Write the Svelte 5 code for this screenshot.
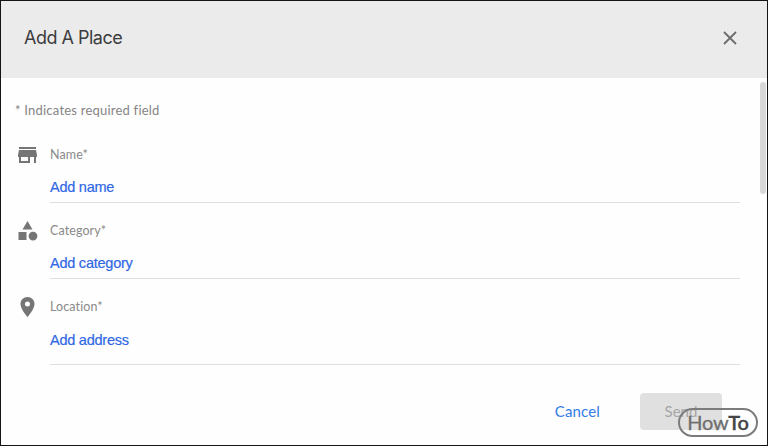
<script lang="ts">
	interface Field {
		id: string;
		label: string;
		action: string;
		icon: string;
	}

	const fields: Field[] = [
		{
			id: 'name',
			label: 'Name*',
			action: 'Add name',
			icon: 'M3 4h17v2H3zM3 7h17l1 5v2h-1v6h-2v-6h-4v6H3v-6H2v-2zM5 14v4h7v-4z'
		},
		{
			id: 'category',
			label: 'Category*',
			action: 'Add category',
			icon: 'M11.5 2l5 8.5h-10zM2.5 13h8v8h-8zM17 12.7a4.4 4.4 0 1 1 0 8.8a4.4 4.4 0 1 1 0-8.8z'
		},
		{
			id: 'location',
			label: 'Location*',
			action: 'Add address',
			icon: 'M11.5 2C7.6 2 4.5 5.1 4.5 9c0 5.2 7 13 7 13s7-7.8 7-13c0-3.9-3.1-7-7-7zm0 4.5a2.5 2.5 0 1 1 0 5a2.5 2.5 0 1 1 0-5z'
		}
	];
</script>

<div class="dialog">
	<header>
		<h1>Add A Place</h1>
		<button class="close" aria-label="Close">
			<svg width="14" height="14" viewBox="0 0 14 14">
				<path d="M1 1l12 12M13 1L1 13" />
			</svg>
		</button>
	</header>

	<main>
		<div class="form">
			<p class="hint">* Indicates required field</p>
			{#each fields as field (field.id)}
				<div class="field {field.id}">
					<svg class="icon" width="24" height="24" viewBox="0 0 24 24">
						<path fill-rule="evenodd" d={field.icon} />
					</svg>
					<div class="body">
						<span class="label">{field.label}</span>
						<button class="value">{field.action}</button>
					</div>
				</div>
			{/each}
		</div>
		<div class="scrollbar"></div>
	</main>

	<footer>
		<button class="cancel">Cancel</button>
		<button class="send" disabled>Send</button>
	</footer>

	<div class="watermark"><span>How</span><b>To</b></div>
</div>

<style>
	:global(body) {
		margin: 0;
	}

	.dialog {
		position: relative;
		box-sizing: border-box;
		width: 768px;
		height: 446px;
		border: 1px solid #151315;
		background: #fefefe;
		font-family: Lato, sans-serif;
		font-variant-ligatures: none;
		display: flex;
		flex-direction: column;
		overflow: hidden;
	}

	button {
		border: 0;
		padding: 0;
		background: none;
		font: inherit;
	}

	header {
		height: 77px;
		flex: none;
		box-sizing: border-box;
		padding: 0 30px 3px 23px;
		display: flex;
		align-items: center;
		justify-content: space-between;
		background: #ebebeb;
	}

	h1 {
		margin: 0;
		font: 400 18px/24px Inter, sans-serif;
		letter-spacing: -0.5px;
		color: #3c3c3e;
	}

	.close {
		display: flex;
	}

	.close path {
		stroke: #6c6c6c;
		stroke-width: 1.8;
		fill: none;
	}

	main {
		display: flex;
		justify-content: space-between;
		height: 291px;
		flex: none;
	}

	.form {
		width: 739px;
	}

	.hint {
		margin: 22px 0 21px 14px;
		font-size: 13px;
		line-height: 20px;
		letter-spacing: 0.22px;
		color: #858585;
	}

	.field {
		display: flex;
		height: 62px;
		margin-bottom: 14px;
	}

	.field.location {
		height: 72px;
		margin-bottom: 0;
	}

	.icon {
		flex: none;
		margin: 2px 10px 0 15px;
		fill: #757575;
	}

	.body {
		flex: 1;
		box-sizing: border-box;
		display: flex;
		flex-direction: column;
		align-items: flex-start;
		border-bottom: 1px solid #dedede;
	}

	.label {
		margin-top: 5px;
		font-size: 12.5px;
		line-height: 18px;
		letter-spacing: 0.1px;
		color: #8a8a8a;
	}

	.value {
		margin-top: 13px;
		font: 14.5px/20px "Liberation Sans", Arial, sans-serif;
		letter-spacing: -0.24px;
		-webkit-text-stroke: 0.2px;
		color: #3068e4;
	}

	.location .value {
		margin-top: 14px;
	}

	.scrollbar {
		width: 6px;
		height: 112px;
		margin: 4px 1px 0 0;
		border-radius: 3px;
		background: #d9d9d9;
	}

	footer {
		display: flex;
		justify-content: flex-end;
		align-items: center;
		gap: 40px;
		margin-top: 24px;
		padding-right: 45px;
		font-size: 15px;
	}

	.cancel {
		padding-bottom: 1px;
		letter-spacing: 0.15px;
		color: #347de9;
	}

	.send {
		width: 82px;
		height: 37px;
		padding-bottom: 1px;
		border-radius: 4px;
		background: #e0e0e0;
		color: #a6a6a6;
	}

	.watermark {
		position: absolute;
		left: 677px;
		top: 407px;
		box-sizing: border-box;
		width: 80px;
		height: 29px;
		padding-bottom: 2px;
		border: 2px solid #7c7c7c;
		border-radius: 15px;
		display: flex;
		justify-content: center;
		align-items: center;
		font-size: 20px;
		letter-spacing: -0.3px;
		color: #6e6e6e;
		-webkit-text-stroke: 0.3px;
	}

	.watermark b {
		font-weight: 600;
		color: #454545;
	}
</style>
